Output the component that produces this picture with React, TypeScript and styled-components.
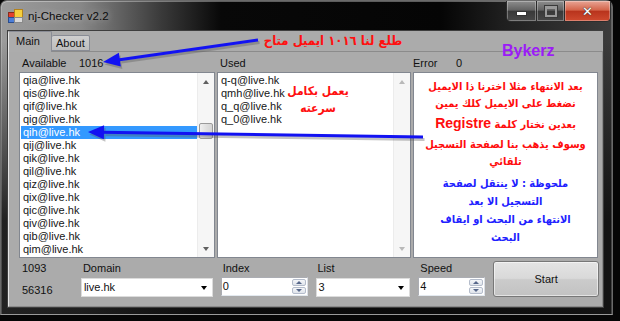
import React from "react";
import styled, { createGlobalStyle } from "styled-components";

const GlobalStyle = createGlobalStyle`
  html, body { margin: 0; padding: 0; background: #050505; }
  body { font-family: "Liberation Sans", Arial, sans-serif; font-size: 11px; color: #111; }
  #root { width: 620px; height: 321px; overflow: hidden; }
`;

const Screen = styled.div`
  position: relative;
  width: 620px;
  height: 321px;
  overflow: hidden;
  background: #060606;
`;

const Window = styled.div`
  width: 611px;
  height: 313px;
  border: 1px solid #6a6a6a;
  border-bottom-color: #9a9a9a;
  border-radius: 7px 7px 0 0;
  display: flex;
  flex-direction: column;
  background:
    linear-gradient(180deg, rgba(0,0,0,0) 0px, rgba(0,0,0,0) 40px, rgba(12,12,12,0.85) 220px),
    linear-gradient(90deg, #9c9c9c 0px, #878787 80px, #3a3a3a 160px, #080808 220px, #050505 440px, #1e1e1e 500px, #3c3c3c 611px);
  box-shadow: inset 0 1px 0 rgba(255,255,255,0.35), inset 1px 0 0 rgba(255,255,255,0.2), inset -1px 0 0 rgba(255,255,255,0.2);
`;

const TitleBar = styled.div`
  height: 29px;
  flex: none;
  display: flex;
  align-items: flex-start;
  padding-left: 7px;
`;

const AppIcon = styled.svg`
  flex: none;
  margin-top: 8px;
`;

const Title = styled.div`
  margin-left: 5px;
  margin-top: 8px;
  font-size: 11.5px;
  line-height: 14px;
  color: #0c0c0c;
  text-shadow: 0 0 7px rgba(255, 255, 255, 0.55);
`;

const CaptionButtons = styled.div`
  display: flex;
  margin-left: auto;
  margin-right: 1px;
  height: 20px;
  border: 1px solid #2c2c2c;
  border-top: none;
  border-radius: 0 0 5px 5px;
  overflow: hidden;
`;

const CapBtn = styled.div<{ $w: number; $close?: boolean }>`
  width: ${(p) => p.$w}px;
  height: 100%;
  display: flex;
  align-items: center;
  justify-content: center;
  border-left: 1px solid #2a2a2a;
  &:first-child { border-left: none; }
  background: ${(p) =>
    p.$close
      ? "linear-gradient(#e8a595, #d4654b 45%, #b9341d 52%, #cf4a2f)"
      : "linear-gradient(#8e8e8e, #626262 45%, #393939 52%, #474747)"};
  box-shadow: inset 0 0 0 1px rgba(255, 255, 255, 0.3);
`;

const MinGlyph = styled.div`
  width: 9px;
  height: 3px;
  margin-top: 5px;
  background: #fff;
  border: 1px solid #333;
`;

const MaxGlyph = styled.div`
  width: 8px;
  height: 6px;
  border: 2px solid #9a9a9a;
  border-top-width: 3px;
  box-shadow: 0 0 0 1px #3a3a3a;
`;

const CloseGlyph = styled.div`
  font-family: "DejaVu Sans", sans-serif;
  font-weight: bold;
  font-size: 13px;
  line-height: 13px;
  color: #fff;
  text-shadow: 0 0 1px #333, 0 0 1px #333;
`;

const Client = styled.div`
  flex: 1;
  margin: 0 8px 6px 6px;
  background: #ababab;
  border: 1px solid #3e3e3e;
  display: flex;
  flex-direction: column;
`;

const TabStrip = styled.div`
  display: flex;
  align-items: flex-end;
  height: 20px;
  flex: none;
`;

const Tab = styled.div<{ $active?: boolean }>`
  position: relative;
  z-index: ${(p) => (p.$active ? 1 : 0)};
  box-sizing: border-box;
  height: ${(p) => (p.$active ? 21 : 16)}px;
  margin-bottom: ${(p) => (p.$active ? -1 : 0)}px;
  padding: ${(p) => (p.$active ? "3px 0 0 7px" : "1px 0 0 4px")};
  width: ${(p) => (p.$active ? 44 : 38)}px;
  border: 1px solid #898c95;
  border-bottom: ${(p) => (p.$active ? "none" : "1px solid #898c95")};
  border-left-color: ${(p) => (p.$active ? "#e8e8e8" : "#898c95")};
  border-left-width: ${(p) => (p.$active ? 1 : 0)}px;
  border-radius: 2px 2px 0 0;
  background: ${(p) => (p.$active ? "#acacac" : "linear-gradient(#cfcfcf, #bdbdbd)")};
  font-size: 11px;
  line-height: 13px;
  color: #111;
`;

const TabPage = styled.div`
  flex: 1;
  border: 1px solid #8b8b8b;
  border-left-color: #e4e4e4;
  padding: 4px 3px 0 10px;
  display: flex;
  flex-direction: column;
`;

const ColumnsRow = styled.div<{ $h: number; $mb?: number }>`
  display: grid;
  grid-template-columns: 196px 194px 185px;
  column-gap: 2px;
  height: ${(p) => p.$h}px;
  margin-bottom: ${(p) => p.$mb ?? 0}px;
  flex: none;
`;

const HeaderCell = styled.div<{ $pad: number }>`
  display: flex;
  padding-left: ${(p) => p.$pad}px;
  font-size: 11px;
  line-height: 14px;
  color: #111;
`;

const HeaderLabel = styled.span<{ $w?: number }>`
  display: inline-block;
  width: ${(p) => (p.$w ? `${p.$w}px` : "auto")};
`;

const ListBox = styled.div`
  display: flex;
  background: #fff;
  border: 1px solid #828790;
  overflow: hidden;
`;

const ListItems = styled.div`
  flex: 1;
  padding-top: 1px;
  display: flex;
  flex-direction: column;
`;

const ListItem = styled.div<{ $selected?: boolean }>`
  height: 13px;
  line-height: 13px;
  font-size: 11px;
  margin-left: 1px;
  padding-left: 2px;
  white-space: nowrap;
  color: ${(p) => (p.$selected ? "#fff" : "#161616")};
  background: ${(p) => (p.$selected ? "#3399ff" : "transparent")};
`;

const ScrollBar = styled.div`
  width: 17px;
  flex: none;
  display: flex;
  flex-direction: column;
  background: #f6f6f6;
  border-left: 1px solid #ececec;
  box-sizing: border-box;
`;

const ScrollArrow = styled.div<{ $down?: boolean; $dim?: boolean }>`
  height: 17px;
  flex: none;
  display: flex;
  align-items: center;
  justify-content: center;
  &::after {
    content: "";
    border-left: 3.5px solid transparent;
    border-right: 3.5px solid transparent;
    ${(p) => (p.$down ? "border-top" : "border-bottom")}: 4px solid ${(p) => (p.$dim ? "#b9b9b9" : "#606060")};
  }
`;

const ScrollTrack = styled.div<{ $thumbTop: number }>`
  flex: 1;
  padding-top: ${(p) => p.$thumbTop}px;
`;

const Thumb = styled.div`
  height: 14px;
  margin: 0 1px;
  border: 1px solid #9a9a9a;
  border-radius: 2px;
  background: linear-gradient(90deg, #f0f0f0, #e0e0e0 50%, #d4d4d4);
`;

const arabicFont = `"DejaVu Sans", sans-serif`;

const NotePanel = styled.div`
  background: #fff;
  border: 1px solid #828790;
  direction: rtl;
  text-align: center;
  padding-top: 5px;
  font-family: ${arabicFont};
  font-stretch: condensed;
  font-weight: bold;
  overflow: hidden;
`;

const NoteLine = styled.div<{ $color: string; $size: number; $lh: number; $mt?: number }>`
  color: ${(p) => p.$color};
  font-size: ${(p) => p.$size}px;
  line-height: ${(p) => p.$lh}px;
  margin-top: ${(p) => p.$mt ?? 0}px;
  white-space: nowrap;
`;

const LatinWord = styled.span`
  font-family: "Liberation Sans", Arial, sans-serif;
  font-stretch: normal;
  font-size: 14px;
`;

const BottomRow = styled.div`
  display: flex;
  gap: 8px;
  margin-top: 3px;
  height: 36px;
  flex: none;
`;

const Stats = styled.div`
  width: 51px;
  padding-left: 3px;
  display: flex;
  flex-direction: column;
  gap: 8px;
  font-size: 11px;
  line-height: 14px;
`;

const Field = styled.div<{ $w: number }>`
  width: ${(p) => p.$w}px;
  display: flex;
  flex-direction: column;
`;

const FieldLabel = styled.div`
  height: 16px;
  line-height: 14px;
  padding-left: 2px;
  font-size: 11px;
  color: #111;
`;

const Combo = styled.div`
  height: 20px;
  margin-top: 1px;
  box-sizing: border-box;
  background: #fff;
  border: 1px solid #dcdcdc;
  display: flex;
  align-items: center;
  justify-content: space-between;
  padding: 0 5px 0 2px;
  font-size: 11px;
  &::after {
    content: "";
    border-left: 3.5px solid transparent;
    border-right: 3.5px solid transparent;
    border-top: 4px solid #000;
    margin-top: 1px;
  }
`;

const Numeric = styled.div`
  height: 19px;
  box-sizing: border-box;
  background: #fff;
  border: 1px solid #abadb3;
  border-right-color: #dbdfe6;
  border-bottom-color: #e3e9ef;
  display: flex;
`;

const NumValue = styled.div`
  flex: 1;
  padding-left: 1px;
  line-height: 16px;
  font-size: 11px;
`;

const Spinner = styled.div`
  width: 14px;
  display: flex;
  flex-direction: column;
  gap: 1px;
  padding: 1px 1px 1px 0;
`;

const SpinBtn = styled.div<{ $down?: boolean }>`
  flex: 1;
  display: flex;
  align-items: center;
  justify-content: center;
  border: 1px solid #b4bccb;
  border-radius: 2px;
  background: linear-gradient(#f4f6f9, #dfe4eb);
  &::after {
    content: "";
    border-left: 3px solid transparent;
    border-right: 3px solid transparent;
    ${(p) => (p.$down ? "border-top" : "border-bottom")}: 3px solid #56678a;
  }
`;

const StartButton = styled.button`
  width: 106px;
  height: 36px;
  margin-left: 0;
  border: 1px solid #777;
  border-radius: 3px;
  background: linear-gradient(#e4e4e4, #d9d9d9 48%, #cbcbcb 52%, #c2c2c2);
  box-shadow: inset 0 0 0 1px rgba(255, 255, 255, 0.55);
  font-family: "Liberation Sans", Arial, sans-serif;
  font-size: 11px;
  color: #111;
  padding: 0 0 1px 0;
`;

const Annotation = styled.div<{ $x: number; $y: number; $w: number; $color: string; $size: number; $lh: number }>`
  position: absolute;
  left: ${(p) => p.$x}px;
  top: ${(p) => p.$y}px;
  width: ${(p) => p.$w}px;
  direction: rtl;
  text-align: center;
  white-space: nowrap;
  font-family: ${arabicFont};
  font-stretch: condensed;
  font-weight: bold;
  font-size: ${(p) => p.$size}px;
  line-height: ${(p) => p.$lh}px;
  color: ${(p) => p.$color};
`;

const Signature = styled.div`
  position: absolute;
  left: 502px;
  top: 42px;
  font-family: "Liberation Sans", Arial, sans-serif;
  font-weight: bold;
  font-size: 16px;
  line-height: 18px;
  color: #9b1cf6;
`;

const ArrowLayer = styled.svg`
  position: absolute;
  left: 0;
  top: 0;
  pointer-events: none;
`;

const available = ["qia", "qis", "qif", "qig", "qih", "qij", "qik", "qil", "qiz", "qix", "qic", "qiv", "qib", "qim"].map(
  (s) => `${s}@live.hk`
);
const used = ["q-q", "qmh", "q_q", "q_0"].map((s) => `${s}@live.hk`);

const redLines: { text: React.ReactNode; size: number; lh: number }[] = [
  { text: "بعد الانتهاء مثلا اخترنا ذا الايميل", size: 11, lh: 17 },
  { text: "نضغط على الايميل كلك يمين", size: 11, lh: 17 },
  {
    text: (
      <>
        بعدين نختار كلمة <LatinWord>Registre</LatinWord>
      </>
    ),
    size: 11,
    lh: 22,
  },
  { text: "وسوف يذهب بنا لصفحة التسجيل", size: 11, lh: 17 },
  { text: "تلقائي", size: 11, lh: 17 },
];

const blueLines = ["ملحوظة : لا ينتقل لصفحة", "التسجيل الا بعد", "الانتهاء من البحث او ايقاف", "البحث"];

function Arrow({ x1, y1, tx, ty, len, half }: { x1: number; y1: number; tx: number; ty: number; len: number; half: number }) {
  const dx = tx - x1;
  const dy = ty - y1;
  const d = Math.hypot(dx, dy);
  const ux = dx / d;
  const uy = dy / d;
  const bx = tx - ux * len;
  const by = ty - uy * len;
  const px = -uy * half;
  const py = ux * half;
  const pts = `${tx},${ty} ${bx + px},${by + py} ${bx - px},${by - py}`;
  return (
    <g>
      <g opacity={0.35} transform="translate(1.5,2.5)">
        <line x1={x1} y1={y1} x2={bx} y2={by} stroke="#555" strokeWidth={3} />
        <polygon points={pts} fill="#555" />
      </g>
      <line x1={x1} y1={y1} x2={bx + ux * 2} y2={by + uy * 2} stroke="#1212f2" strokeWidth={3} />
      <polygon points={pts} fill="#1212f2" />
    </g>
  );
}

export default function App() {
  return (
    <Screen>
      <GlobalStyle />
      <Window>
        <TitleBar>
          <AppIcon width="15" height="14" viewBox="0 0 15 14">
            <rect x="0.5" y="3.5" width="6" height="5" fill="#e2412f" stroke="#8a2a1c" />
            <rect x="6.5" y="0.5" width="8" height="8" fill="#f6cf3d" stroke="#b3821b" />
            <rect x="0.5" y="8.5" width="6" height="5" fill="#4d7fd8" stroke="#2b4d8c" />
            <rect x="6.5" y="8.5" width="8" height="5" fill="#d9d9d9" stroke="#8a8a8a" />
          </AppIcon>
          <Title>nj-Checker v2.2</Title>
          <CaptionButtons>
            <CapBtn $w={29}>
              <MinGlyph />
            </CapBtn>
            <CapBtn $w={27}>
              <MaxGlyph />
            </CapBtn>
            <CapBtn $w={45} $close>
              <CloseGlyph>✕</CloseGlyph>
            </CapBtn>
          </CaptionButtons>
        </TitleBar>
        <Client>
          <TabStrip>
            <Tab $active>Main</Tab>
            <Tab>About</Tab>
          </TabStrip>
          <TabPage>
            <ColumnsRow $h={14} $mb={2}>
              <HeaderCell $pad={3}>
                <HeaderLabel $w={57}>Available</HeaderLabel>
                <HeaderLabel>1016</HeaderLabel>
              </HeaderCell>
              <HeaderCell $pad={3}>
                <HeaderLabel>Used</HeaderLabel>
              </HeaderCell>
              <HeaderCell $pad={0}>
                <HeaderLabel $w={43}>Error</HeaderLabel>
                <HeaderLabel>0</HeaderLabel>
              </HeaderCell>
            </ColumnsRow>
            <ColumnsRow $h={186}>
              <ListBox>
                <ListItems>
                  {available.map((s) => (
                    <ListItem key={s} $selected={s.startsWith("qih")}>
                      {s}
                    </ListItem>
                  ))}
                </ListItems>
                <ScrollBar>
                  <ScrollArrow />
                  <ScrollTrack $thumbTop={33}>
                    <Thumb />
                  </ScrollTrack>
                  <ScrollArrow $down />
                </ScrollBar>
              </ListBox>
              <ListBox>
                <ListItems>
                  {used.map((s) => (
                    <ListItem key={s}>{s}</ListItem>
                  ))}
                </ListItems>
                <ScrollBar>
                  <ScrollArrow $dim />
                  <ScrollTrack $thumbTop={0} />
                  <ScrollArrow $down $dim />
                </ScrollBar>
              </ListBox>
              <NotePanel>
                {redLines.map((l, i) => (
                  <NoteLine key={i} $color="#ff0d0d" $size={l.size} $lh={l.lh}>
                    {l.text}
                  </NoteLine>
                ))}
                {blueLines.map((t, i) => (
                  <NoteLine key={t} $color="#2121ff" $size={11} $lh={18} $mt={i === 0 ? 5 : 0}>
                    {t}
                  </NoteLine>
                ))}
              </NotePanel>
            </ColumnsRow>
            <BottomRow>
              <Stats>
                <div>1093</div>
                <div>56316</div>
              </Stats>
              <Field $w={132}>
                <FieldLabel>Domain</FieldLabel>
                <Combo>live.hk</Combo>
              </Field>
              <Field $w={87}>
                <FieldLabel>Index</FieldLabel>
                <Numeric>
                  <NumValue>0</NumValue>
                  <Spinner>
                    <SpinBtn />
                    <SpinBtn $down />
                  </Spinner>
                </Numeric>
              </Field>
              <Field $w={95}>
                <FieldLabel>List</FieldLabel>
                <Combo>3</Combo>
              </Field>
              <Field $w={67}>
                <FieldLabel>Speed</FieldLabel>
                <Numeric>
                  <NumValue>4</NumValue>
                  <Spinner>
                    <SpinBtn />
                    <SpinBtn $down />
                  </Spinner>
                </Numeric>
              </Field>
              <StartButton>Start</StartButton>
            </BottomRow>
          </TabPage>
        </Client>
      </Window>

      <Annotation $x={262} $y={32} $w={142} $color="#ff1010" $size={13} $lh={17}>
        طلع لنا ١٠١٦ ايميل متاح
      </Annotation>
      <Annotation $x={278} $y={83} $w={80} $color="#ff1010" $size={12} $lh={17}>
        <div>يعمل بكامل</div>
        <div>سرعته</div>
      </Annotation>
      <Signature>Bykerz</Signature>

      <ArrowLayer width="620" height="321" viewBox="0 0 620 321">
        <Arrow x1={258} y1={40} tx={103} ty={62} len={17} half={7} />
        <Arrow x1={423} y1={137} tx={88} ty={132} len={16} half={7} />
      </ArrowLayer>
    </Screen>
  );
}
